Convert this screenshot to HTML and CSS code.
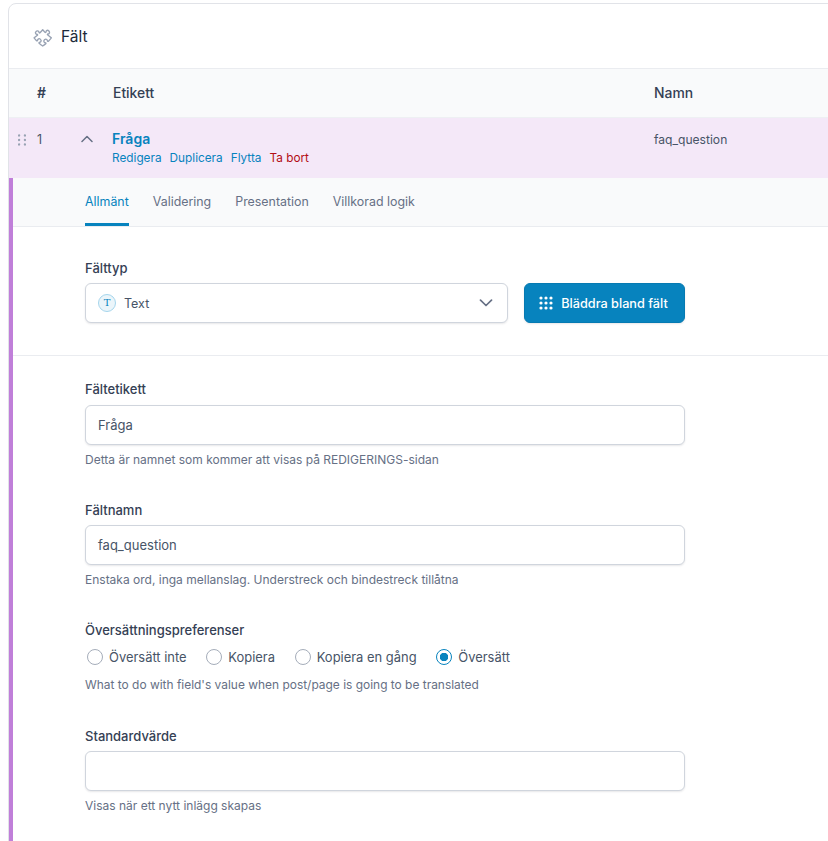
FILE: index.html
```html
<!DOCTYPE html>
<html lang="sv">
<head>
<meta charset="utf-8">
<title>Fält</title>
<link rel="stylesheet" href="styles.css">
</head>
<body>
<section class="card">
  <header class="card-head">
    <svg class="puzzle" viewBox="0 0 24 24" width="20" height="20" fill="none" stroke="#98a2b3" stroke-width="1.600" stroke-linejoin="round" stroke-linecap="round">
      <path transform="rotate(45 12 12) translate(0 .5)" d="M14.25 6.087c0-.355.186-.676.401-.959.221-.29.349-.634.349-1.003 0-1.036-1.007-1.875-2.25-1.875s-2.25.84-2.25 1.875c0 .369.128.713.349 1.003.215.283.401.604.401.959a.64.64 0 0 1-.657.643 48.39 48.39 0 0 1-4.163-.3c.186 1.613.293 3.25.315 4.907a.656.656 0 0 1-.658.663c-.355 0-.676-.186-.959-.401a1.647 1.647 0 0 0-1.003-.349c-1.036 0-1.875 1.007-1.875 2.25s.84 2.25 1.875 2.25c.369 0 .713-.128 1.003-.349.283-.215.604-.401.959-.401.31 0 .555.26.532.57a48.039 48.039 0 0 1-.642 5.056c1.518.19 3.058.309 4.616.354a.64.64 0 0 0 .657-.643c0-.355-.186-.676-.401-.959a1.647 1.647 0 0 1-.349-1.003c0-1.035 1.008-1.875 2.25-1.875 1.243 0 2.25.84 2.25 1.875 0 .369-.128.713-.349 1.003-.215.283-.4.604-.4.959 0 .333.277.599.61.58a48.1 48.1 0 0 0 5.427-.63 48.05 48.05 0 0 0 .582-4.717.532.532 0 0 0-.533-.57c-.355 0-.676.186-.959.401-.29.221-.634.349-1.003.349-1.035 0-1.875-1.007-1.875-2.25s.84-2.25 1.875-2.25c.37 0 .713.128 1.003.349.283.215.604.401.96.401a.656.656 0 0 0 .658-.663 48.422 48.422 0 0 0-.37-5.36c-1.886.342-3.81.574-5.766.689a.578.578 0 0 1-.61-.58Z"/>
    </svg>
    <h2 class="card-title">Fält</h2>
  </header>

  <div class="list-head">
    <span class="col-num">#</span>
    <span class="col-label">Etikett</span>
    <span class="col-name">Namn</span>
  </div>

  <div class="field-row">
    <svg class="grip" viewBox="0 0 8 12" width="8" height="12" fill="#98a2b3">
      <circle cx="1.100" cy="1.500" r="1.150"/><circle cx="6.900" cy="1.500" r="1.150"/>
      <circle cx="1.100" cy="6" r="1.150"/><circle cx="6.900" cy="6" r="1.150"/>
      <circle cx="1.100" cy="10.500" r="1.150"/><circle cx="6.900" cy="10.500" r="1.150"/>
    </svg>
    <span class="row-num">1</span>
    <svg class="chev-up" viewBox="0 0 12 8" width="12" height="8" fill="none" stroke="#667085" stroke-width="1.500" stroke-linecap="round" stroke-linejoin="round"><path d="M1 6.500 6 1.500l5 5"/></svg>
    <div class="row-main">
      <a class="row-title">Fråga</a>
      <div class="row-actions">
        <a>Redigera</a><a>Duplicera</a><a>Flytta</a><a class="danger">Ta bort</a>
      </div>
    </div>
    <span class="row-name">faq_question</span>
  </div>

  <div class="settings">
    <nav class="tabs">
      <a class="tab active">Allmänt</a>
      <a class="tab">Validering</a>
      <a class="tab">Presentation</a>
      <a class="tab">Villkorad logik</a>
    </nav>

    <div class="group group-type">
      <label class="label">Fälttyp</label>
      <div class="type-row">
        <div class="select">
          <span class="type-icon">T</span>
          <span class="select-value">Text</span>
          <svg class="chev-down" viewBox="0 0 14 8" width="14" height="8" fill="none" stroke="#667085" stroke-width="1.700" stroke-linecap="round" stroke-linejoin="round"><path d="M1.500 1.200 7 6.500l5.500-5.300"/></svg>
        </div>
        <button class="browse" type="button">
          <svg viewBox="0 0 14 14" width="14" height="14" fill="#fff">
            <circle cx="2" cy="2" r="1.600"/><circle cx="7" cy="2" r="1.600"/><circle cx="12" cy="2" r="1.600"/>
            <circle cx="2" cy="7" r="1.600"/><circle cx="7" cy="7" r="1.600"/><circle cx="12" cy="7" r="1.600"/>
            <circle cx="2" cy="12" r="1.600"/><circle cx="7" cy="12" r="1.600"/><circle cx="12" cy="12" r="1.600"/>
          </svg>
          Bläddra bland fält
        </button>
      </div>
    </div>

    <div class="group-stack">
      <div class="field">
        <label class="label">Fältetikett</label>
        <div class="input">Fråga</div>
        <p class="hint">Detta är namnet som kommer att visas på REDIGERINGS-sidan</p>
      </div>
      <div class="field">
        <label class="label">Fältnamn</label>
        <div class="input">faq_question</div>
        <p class="hint">Enstaka ord, inga mellanslag. Understreck och bindestreck tillåtna</p>
      </div>
      <div class="field field-radio">
        <label class="label">Översättningspreferenser</label>
        <div class="radios">
          <span class="radio"><i class="dot"></i>Översätt inte</span>
          <span class="radio"><i class="dot"></i>Kopiera</span>
          <span class="radio"><i class="dot"></i>Kopiera en gång</span>
          <span class="radio"><i class="dot on"></i>Översätt</span>
        </div>
        <p class="hint">What to do with field's value when post/page is going to be translated</p>
      </div>
      <div class="field">
        <label class="label">Standardvärde</label>
        <div class="input"></div>
        <p class="hint">Visas när ett nytt inlägg skapas</p>
      </div>
    </div>
  </div>
</section>
</body>
</html>
```
FILE: styles.css
```css
* { box-sizing: border-box; }
html, body { margin: 0; height: 841px; overflow: hidden; background: #fff; }
body {
  padding: 3px 0 0 8px;
  font-family: Inter, "Liberation Sans", sans-serif;
  color: #344054;
}
.card {
  width: 840px;
  border: 1px solid #e1e3e8;
  border-radius: 8px 0 0 0;
  background: #fff;
}
.card-head {
  height: 65px;
  display: flex;
  align-items: center;
  padding-left: 24px;
  gap: 8px;
  border-bottom: 1px solid #eaecf0;
}
.puzzle { flex: none; overflow: visible; }
.card-title { margin: 0; font-size: 15.500px; font-weight: 400; color: #1d2939; }

.list-head {
  height: 49px;
  display: flex;
  align-items: center;
  background: #f9fafb;
  font-size: 13.900px;
  font-weight: 500;
  padding-left: 28px;
  border-bottom: 1px solid #eef0f3;
}
.col-num { width: 76px; font-weight: 600; }
.col-label { width: 541px; }

.field-row {
  height: 60px;
  display: flex;
  align-items: flex-start;
  background: #f4e8f8;
  padding-top: 14px;
  padding-left: 9px;
  font-size: 12.100px;
}
.grip { flex: none; margin-top: 2px; }
.row-num { width: 44px; margin-left: 11px; font-size: 12.500px; color: #475467; line-height: 15px; }
.chev-up { flex: none; margin-top: 3px; }
.row-main { width: 542px; margin: -1px 0 0 19px; }
.row-title { display: block; font-size: 14px; font-weight: 600; color: #0783be; line-height: 15px; }
.row-actions { display: flex; gap: 8px; margin-top: 4px; font-size: 11.800px; line-height: 16px; color: #0783be; }
.danger { color: #b30d14; }
.row-name { line-height: 15px; color: #475467; }

.settings { border-left: 4px solid #c07fd9; }
.tabs {
  height: 49px;
  display: flex;
  gap: 24px;
  padding-left: 72px;
  background: #f9fafb;
  border-bottom: 1px solid #eaecf0;
  font-size: 12.400px;
  color: #667085;
}
.tab { height: 48px; line-height: 47px; }
.tab.active { color: #0783be; border-bottom: 3px solid #0783be; }

.label { display: block; font-size: 13px; font-weight: 500; line-height: 16px; color: #344054; }
.group-type { height: 129px; padding: 33px 0 0 72px; border-bottom: 1px solid #eaecf0; }
.type-row { display: flex; gap: 16px; margin-top: 7px; }
.select, .input {
  height: 40px;
  border: 1px solid #d0d5dd;
  border-radius: 6px;
  background: #fff;
  box-shadow: 0 1px 2px rgba(16, 24, 40, .1);
  font-size: 13px;
  color: #475467;
  display: flex;
  align-items: center;
}
.select { width: 423px; padding: 0 14px 0 12px; font-size: 12.500px; }
.type-icon {
  width: 18px;
  height: 18px;
  border: 1px solid #a5d5ec;
  border-radius: 50%;
  background: #ebf5fa;
  color: #0783be;
  font: 10px/16px "DejaVu Serif", serif;
  text-align: center;
  flex: none;
}
.select-value { margin-left: 8px; flex: 1; }
.browse {
  width: 161px;
  height: 40px;
  display: flex;
  align-items: center;
  justify-content: center;
  gap: 8px;
  border: 1px solid #067ab2;
  border-radius: 6px;
  background: #0783be;
  box-shadow: 0 1px 2px rgba(16, 24, 40, .1);
  color: #fff;
  font: 500 12.700px Inter, sans-serif;
  padding: 0 2px 0 0;
}
.group-stack { padding: 25.400px 0 0 72px; }
.field { height: 120.300px; }
.field .label { margin-bottom: 7.600px; }
.input { width: 600px; padding: 0 12px; }
.hint { margin: 8px 0 0; font-size: 12px; line-height: 14px; color: #667085; }
.field-radio { height: 105.700px; }
.field-radio .label { margin-bottom: 9.200px; }
.radios { display: flex; gap: 19.700px; padding-left: 2px; font-size: 12.950px; color: #475467; height: 20px; align-items: center; }
.radio { display: flex; align-items: center; gap: 6px; }
.dot {
  width: 16px;
  height: 16px;
  border: 1px solid #a5adba;
  border-radius: 50%;
  background: #fff;
  flex: none;
}
.dot.on { border-color: #0783be; border-width: 1.500px; background: radial-gradient(circle, #0783be 0 4px, #fff 4.500px); }
.radios + .hint { margin-top: 11px; font-size: 11.950px; }
```
